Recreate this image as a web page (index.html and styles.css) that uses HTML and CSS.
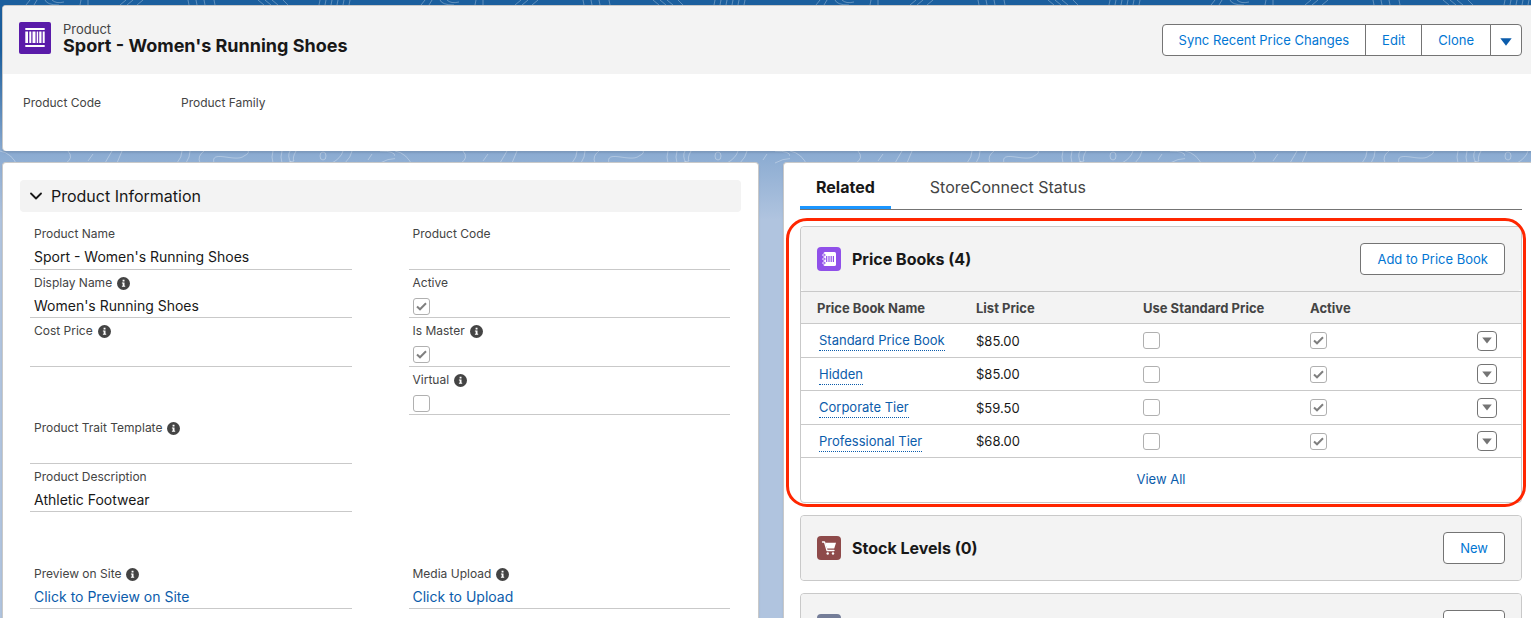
FILE: index.html
```
<!DOCTYPE html>
<html lang="en">
<head>
    <meta charset="UTF-8">
    <meta name="viewport" content="width=device-width, initial-scale=1.0">
    <title>Sport - Women's Running Shoes | Product</title>
    <link rel="stylesheet" href="styles.css">
</head>
<body>
    <!-- Shared icons -->
    <svg class="sprite" aria-hidden="true">
        <symbol id="icon-info" viewBox="0 0 13 13">
            <circle cx="6.5" cy="6.5" r="6.5" fill="#444"/>
            <path d="M5.600 2.800h1.900v1.600H5.600zM4.900 5.500h2.600v3.200h.7v1.100H4.900V8.700h.8V6.600h-.8z" fill="#fff"/>
        </symbol>
        <symbol id="icon-down" viewBox="0 0 12 8">
            <path d="M0.300 0.300h11.400L6 7.700z" fill="currentColor"/>
        </symbol>
    </svg>

    <header class="card page-header">
        <div class="header-top">
            <svg class="product-icon" viewBox="0 0 32 32" aria-hidden="true">
                <rect width="32" height="32" rx="2" fill="#5a1ba9"/>
                <path d="M6.300 6h19.400v2H6.300zM6.300 23h19.400v2H6.300zM6.300 9.500h2.700v11.500H6.300zM10.300 9.500h2v11.500h-2zM13.500 9.500h3v11.500h-3zM17.700 9.500h1.500v11.500h-1.500zM20.200 9.500h2.300v11.500h-2.300zM23.700 9.500h2v11.500h-2z" fill="#fff"/>
            </svg>
            <div class="header-title">
                <div class="entity">Product</div>
                <h1>Sport - Women's Running Shoes</h1>
            </div>
            <div class="button-group">
                <button type="button">Sync Recent Price Changes</button>
                <button type="button">Edit</button>
                <button type="button">Clone</button>
                <button type="button" class="more" aria-label="More actions"><svg width="12" height="8"><use href="#icon-down"/></svg></button>
            </div>
        </div>
        <div class="header-fields">
            <div>Product Code</div>
            <div>Product Family</div>
        </div>
    </header>

    <main class="columns">
        <section class="card details">
            <h2 class="section-title">
                <svg width="12" height="8" viewBox="0 0 12 8" aria-hidden="true"><path d="M1 1.500l5 5 5-5" fill="none" stroke="#181818" stroke-width="1.800" stroke-linecap="round" stroke-linejoin="round"/></svg>
                Product Information
            </h2>
            <div class="fields">
                <div class="field">
                    <div class="label">Product Name</div>
                    <div class="value">Sport - Women's Running Shoes</div>
                </div>
                <div class="field">
                    <div class="label">Product Code</div>
                </div>

                <div class="field">
                    <div class="label">Display Name <svg class="info"><use href="#icon-info"/></svg></div>
                    <div class="value">Women's Running Shoes</div>
                </div>
                <div class="field">
                    <label class="label" for="active">Active</label>
                    <input type="checkbox" id="active" checked disabled>
                </div>

                <div class="field">
                    <div class="label">Cost Price <svg class="info"><use href="#icon-info"/></svg></div>
                </div>
                <div class="field">
                    <label class="label" for="master">Is Master <svg class="info"><use href="#icon-info"/></svg></label>
                    <input type="checkbox" id="master" checked disabled>
                </div>

                <div class="empty"></div>
                <div class="field">
                    <label class="label" for="virtual">Virtual <svg class="info"><use href="#icon-info"/></svg></label>
                    <input type="checkbox" id="virtual" disabled>
                </div>

                <div class="field">
                    <div class="label">Product Trait Template <svg class="info"><use href="#icon-info"/></svg></div>
                </div>
                <div class="empty"></div>

                <div class="field">
                    <div class="label">Product Description</div>
                    <div class="value">Athletic Footwear</div>
                </div>
                <div class="empty"></div>

                <div class="empty"></div>
                <div class="empty"></div>

                <div class="field">
                    <div class="label">Preview on Site <svg class="info"><use href="#icon-info"/></svg></div>
                    <a class="value" href="#">Click to Preview on Site</a>
                </div>
                <div class="field">
                    <div class="label">Media Upload <svg class="info"><use href="#icon-info"/></svg></div>
                    <a class="value" href="#">Click to Upload</a>
                </div>
            </div>
        </section>

        <section class="card related">
            <nav class="tabs">
                <a href="#" class="active">Related</a>
                <a href="#">StoreConnect Status</a>
            </nav>

            <article class="list highlight">
                <div class="list-header">
                    <svg class="list-icon" viewBox="0 0 24 24" aria-hidden="true">
                        <rect width="24" height="24" rx="4" fill="#9050e9"/>
                        <path d="M8 5h9.500q1.500 0 1.500 1.500v11q0 1.500-1.500 1.500H8q-1.500 0-1.500-1.500V6.500Q6.500 5 8 5z" fill="#fff"/>
                        <path d="M6 8h1.300M6 12h1.300M6 16h1.300" stroke="#9050e9" stroke-width="2.400" stroke-linecap="round"/>
                        <path d="M5.500 8h1.500M5.500 12h1.500M5.500 16h1.500" stroke="#fff" stroke-width="1.200" stroke-linecap="round"/>
                        <path d="M9.700 9v6M12 9v6M14.200 9v6M16.400 9v6" stroke="#9050e9" stroke-width="1.200"/>
                    </svg>
                    <h2>Price Books (4)</h2>
                    <button type="button" class="button">Add to Price Book</button>
                </div>
                <table>
                    <thead>
                        <tr>
                            <th class="name">Price Book Name</th>
                            <th class="price">List Price</th>
                            <th class="standard">Use Standard Price</th>
                            <th class="on">Active</th>
                            <th></th>
                        </tr>
                    </thead>
                    <tbody>
                        <tr>
                            <td><a href="#">Standard Price Book</a></td>
                            <td>$85.00</td>
                            <td><input type="checkbox" disabled aria-label="Use Standard Price"></td>
                            <td><input type="checkbox" checked disabled aria-label="Active"></td>
                            <td class="menu"><button type="button" aria-label="Row actions"><svg width="10" height="7"><use href="#icon-down"/></svg></button></td>
                        </tr>
                        <tr>
                            <td><a href="#">Hidden</a></td>
                            <td>$85.00</td>
                            <td><input type="checkbox" disabled aria-label="Use Standard Price"></td>
                            <td><input type="checkbox" checked disabled aria-label="Active"></td>
                            <td class="menu"><button type="button" aria-label="Row actions"><svg width="10" height="7"><use href="#icon-down"/></svg></button></td>
                        </tr>
                        <tr>
                            <td><a href="#">Corporate Tier</a></td>
                            <td>$59.50</td>
                            <td><input type="checkbox" disabled aria-label="Use Standard Price"></td>
                            <td><input type="checkbox" checked disabled aria-label="Active"></td>
                            <td class="menu"><button type="button" aria-label="Row actions"><svg width="10" height="7"><use href="#icon-down"/></svg></button></td>
                        </tr>
                        <tr>
                            <td><a href="#">Professional Tier</a></td>
                            <td>$68.00</td>
                            <td><input type="checkbox" disabled aria-label="Use Standard Price"></td>
                            <td><input type="checkbox" checked disabled aria-label="Active"></td>
                            <td class="menu"><button type="button" aria-label="Row actions"><svg width="10" height="7"><use href="#icon-down"/></svg></button></td>
                        </tr>
                    </tbody>
                </table>
                <a class="view-all" href="#">View All</a>
            </article>

            <article class="list">
                <div class="list-header">
                    <svg class="list-icon" viewBox="0 0 24 24" aria-hidden="true">
                        <rect width="24" height="24" rx="4" fill="#8e4a4a"/>
                        <path d="M5.500 6h2l2.500 8.500h7" fill="none" stroke="#fff" stroke-width="1.300" stroke-linecap="round" stroke-linejoin="round"/>
                        <path d="M8.200 6.800h10.800l-1.800 5.700H9.900z" fill="#fff"/>
                        <circle cx="10.700" cy="17.500" r="1.200" fill="#fff"/>
                        <circle cx="16" cy="17.500" r="1.200" fill="#fff"/>
                    </svg>
                    <h2>Stock Levels (0)</h2>
                    <button type="button" class="button">New</button>
                </div>
            </article>

            <article class="list">
                <div class="list-header">
                    <svg class="list-icon" viewBox="0 0 24 24" aria-hidden="true">
                        <rect width="24" height="24" rx="4" fill="#747d98"/>
                    </svg>
                    <button type="button" class="button blank" aria-label="New"></button>
                </div>
            </article>
        </section>
    </main>
</body>
</html>
```
FILE: styles.css
```
* {
    box-sizing: border-box;
}

body {
    margin: 0;
    padding: 5px 0 0 2px;
    height: 100vh;
    overflow: hidden;
    font-family: Inter, "Liberation Sans", sans-serif;
    font-size: 13px;
    color: #181818;
    background-color: #b0c4df;
    background-image:
        url("data:image/svg+xml,%3Csvg xmlns='http://www.w3.org/2000/svg' width='395' height='190' fill='none' stroke='%23fff' stroke-opacity='.3'%3E%3Cpath d='M26 5l4-5M34 5l3-5M45 0q2 5 14 5M52 0q4 4 12 2M80 5l1-5M88 5V0M120 5l6-5M127 5l6-5M137 5l6-5M189 5l-1-5M197 5l-1-5M205 5l-1-5M215 5l-1-5M258 0l6 5M265 0l6 5M272 0l6 5M283 0l5 5M319 5l1-5M325 5l1-5M331 5l1-5M337 5l1-5M343 5l1-5M349 5l1-5M0 151q12 2 18 16M68 151q6 7-2 12M88 161l5-7M105 163l7-12M117 163l5-12M177 163q5-6 5-12M186 163q4-6 4-12M200 163q-3-7 4-12M214 163c-4-14 22 0 30-7q6-3 4-5M273 163q-2-6 0-12M282 163q-2-6 0-12M290 151q-3 5 1 12M296 151q-4 7-2 10l-5 1M332 163q9-5 11-12M345 163q6-6 7-12M368 160l4-6M380 163q16-9 30 0M380 151q15 0 15 5'/%3E%3Cellipse cx='323' cy='156' rx='3' ry='4'/%3E%3C/svg%3E"),
        linear-gradient(#1b5f9e 0, #1b5f9e 50px, #89aad1 150px, #b0c4df 220px);
    background-repeat: repeat-x;
}

.sprite {
    display: none;
}

h1,
h2 {
    margin: 0;
}

a {
    color: #0b5cab;
    text-decoration: none;
}

button {
    font-family: inherit;
    font-size: 13px;
    color: #0176d3;
    background: #fff;
    border: 1px solid #747474;
    border-radius: 4px;
    cursor: pointer;
}

/* Cards */
.card {
    background: #fff;
    border: 1px solid #c9c9c9;
    border-radius: 4px;
    box-shadow: 0 2px 2px rgba(0, 0, 0, 0.1);
}

.page-header {
    border-right: none;
    border-bottom: none;
    border-radius: 4px 0 0 4px;
    overflow: hidden;
}

.header-top {
    display: flex;
    align-items: flex-start;
    padding: 16px 9px 18px 16px;
    background: #f3f3f3;
}

.product-icon {
    width: 32px;
    height: 32px;
}

.header-title {
    flex: 1;
    margin-left: 12px;
}

.entity {
    line-height: 14px;
    color: #444;
}

h1 {
    font-size: 18px;
    line-height: 20px;
    font-weight: 700;
}

.button-group {
    display: flex;
    margin-top: 2px;
}

.button-group button {
    height: 32px;
    padding: 0 16px;
    margin-left: -1px;
    border-radius: 0;
}

.button-group button:first-child {
    border-radius: 4px 0 0 4px;
}

.button-group .more {
    width: 32px;
    padding: 2px 0 0;
    color: #0b5cab;
    border-radius: 0 4px 4px 0;
}

.header-fields {
    display: flex;
    padding: 21px 20px 40px;
    font-size: 12px;
    line-height: 16px;
    color: #444;
}

.header-fields div {
    width: 158px;
}

/* Columns */
.columns {
    display: grid;
    grid-template-columns: 757fr 748fr;
    gap: 24px;
    margin-top: 11px;
}

.details {
    padding: 17px;
    border-bottom: none;
}

.section-title {
    display: flex;
    align-items: center;
    gap: 9px;
    height: 32px;
    padding-left: 10px;
    font-size: 16px;
    font-weight: 400;
    background: #f3f3f3;
    border-radius: 4px;
}

.fields {
    display: grid;
    grid-template-columns: 1fr 1fr;
    grid-auto-rows: 49px 48px;
    column-gap: 57px;
    margin-top: 9px;
    padding: 0 11px 0 10px;
}

.field {
    padding: 4px 4px 0;
    border-bottom: 1px solid #c9c9c9;
}

.label {
    display: flex;
    align-items: center;
    gap: 5px;
    font-size: 12px;
    line-height: 18px;
    color: #444;
}

.info {
    width: 13px;
    height: 13px;
}

.value {
    display: block;
    margin-top: 4px;
    font-size: 14px;
    line-height: 20px;
}

input[type="checkbox"] {
    appearance: none;
    display: block;
    width: 17px;
    height: 17px;
    margin: 0;
    background: #fff center no-repeat;
    border: 1px solid #b0b0b0;
    border-radius: 3px;
}

input[type="checkbox"]:checked {
    background-image: url("data:image/svg+xml,%3Csvg xmlns='http://www.w3.org/2000/svg' width='11' height='9'%3E%3Cpath d='M1 4.500l3 2.800 6-6' fill='none' stroke='%23808080' stroke-width='2'/%3E%3C/svg%3E");
}

.field input[type="checkbox"] {
    margin-top: 6px;
}

/* Related lists */
.related {
    padding: 0 9px 16px 16px;
    border-right: none;
    border-bottom: none;
    border-radius: 4px 0 0 0;
}

.tabs {
    display: flex;
    height: 47px;
    border-bottom: 1px solid #747474;
}

.tabs a {
    padding: 0 16px;
    margin-right: 23px;
    font-size: 16px;
    line-height: 48px;
    color: #444;
}

.tabs .active {
    font-weight: 700;
    color: #181818;
    border-bottom: 3px solid #1b96ff;
}

.list {
    margin-top: 12px;
    border: 1px solid #c9c9c9;
    border-radius: 4px;
}

.list-header {
    display: flex;
    align-items: center;
    height: 64px;
    padding: 0 16px;
    background: #f3f3f3;
    border-radius: 4px;
}

.list-icon {
    width: 24px;
    height: 24px;
    margin-right: 11px;
}

.list-header h2 {
    font-size: 16px;
    font-weight: 700;
}

.button {
    height: 32px;
    padding: 0 16px;
    margin-left: auto;
}

.blank {
    width: 62px;
}

/* Red frame around the price books */
.highlight {
    position: relative;
    margin-top: 16px;
}

.highlight::after {
    content: "";
    position: absolute;
    inset: -9px -5px -5px -15px;
    border: 3px solid #ff2600;
    border-radius: 21px;
    pointer-events: none;
}

table {
    width: 100%;
    table-layout: fixed;
    border-collapse: collapse;
}

th {
    height: 32px;
    padding: 0 0 0 16px;
    text-align: left;
    font-weight: 700;
    color: #444;
    background: #f3f3f3;
}

tr {
    border-top: 1px solid #c9c9c9;
}

tbody tr:last-child {
    border-bottom: 1px solid #c9c9c9;
}

td {
    height: 33px;
    padding: 0 0 0 16px;
}

tbody tr:nth-child(odd) td {
    height: 34px;
}

td a {
    display: inline-block;
    margin-left: 2px;
    line-height: 20px;
    border-bottom: 1px dotted #0b5cab;
}

.name {
    width: 159px;
}

.price,
.standard {
    width: 167px;
}

.on {
    width: 16%;
}

.menu button {
    display: flex;
    align-items: center;
    justify-content: center;
    width: 20px;
    height: 20px;
    margin-left: auto;
    margin-right: 24px;
    padding: 0;
    color: #747474;
}

.view-all {
    display: block;
    line-height: 43px;
    padding-bottom: 1px;
    text-align: center;
}
```
